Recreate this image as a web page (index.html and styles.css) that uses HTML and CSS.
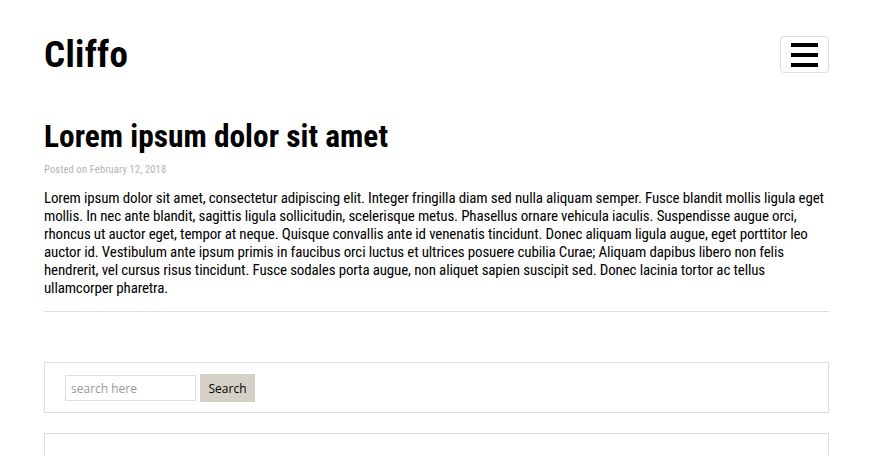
FILE: index.html
```html
<!DOCTYPE html>
<html>
<head>
<meta charset="utf-8">
<link rel="stylesheet" href="styles.css">
</head>
<body>
<div class="page">
  <header class="site-header">
    <div class="logo">Cliffo</div>
    <button class="menu-btn" aria-label="menu">
      <span class="bar"></span><span class="bar"></span><span class="bar"></span>
    </button>
  </header>
  <article class="post">
    <h1 class="post-title">Lorem ipsum dolor sit amet</h1>
    <div class="post-meta">Posted on February 12, 2018</div>
    <p class="post-body">Lorem ipsum dolor sit amet, consectetur adipiscing elit. Integer fringilla diam sed nulla aliquam semper. Fusce blandit mollis ligula eget mollis. In nec ante blandit, sagittis ligula sollicitudin, scelerisque metus. Phasellus ornare vehicula iaculis. Suspendisse augue orci, rhoncus ut auctor eget, tempor at neque. Quisque convallis ante id venenatis tincidunt. Donec aliquam ligula augue, eget porttitor leo auctor id. Vestibulum ante ipsum primis in faucibus orci luctus et ultrices posuere cubilia Curae; Aliquam dapibus libero non felis hendrerit, vel cursus risus tincidunt. Fusce sodales porta augue, non aliquet sapien suscipit sed. Donec lacinia tortor ac tellus ullamcorper pharetra.</p>
  </article>
  <section class="widget search-widget">
    <form class="search-form">
      <input class="search-input" type="text" placeholder="search here">
      <button class="search-btn" type="button">Search</button>
    </form>
  </section>
  <section class="widget empty-widget"></section>
</div>
</body>
</html>
```
FILE: styles.css
```css
html, body {
  margin: 0;
  padding: 0;
  background: #fff;
}
body {
  font-family: "Roboto", "Liberation Sans", Arial, sans-serif;
  font-stretch: 75%;
  color: #000;
}
.page {
  padding: 0 44px;
}
.site-header {
  display: flex;
  justify-content: space-between;
  align-items: center;
  padding-top: 36px;
  height: 37px;
}
.logo {
  font-size: 37px;
  font-weight: bold;
  line-height: 37px;
  letter-spacing: 0.3px;
}
.menu-btn {
  width: 49px;
  height: 37px;
  box-sizing: border-box;
  border: 1px solid #ddd;
  border-radius: 4px;
  background: #fff;
  display: flex;
  flex-direction: column;
  justify-content: center;
  align-items: center;
  gap: 6px;
  padding: 0;
}
.bar {
  display: block;
  width: 27px;
  height: 4px;
  background: #000;
}
.post {
  margin-top: 47px;
  border-bottom: 1px solid #ddd;
  padding-bottom: 14px;
}
.post-title {
  font-size: 31.4px;
  line-height: 34px;
  margin: 0;
  font-weight: bold;
  letter-spacing: 0;
}
.post-meta {
  font-size: 10.5px;
  color: #b4b4b4;
  margin-top: 10px;
  line-height: 12px;
  letter-spacing: 0.15px;
}
.post-body {
  font-size: 15px;
  line-height: 18px;
  margin: 13px 0 0;
  letter-spacing: -0.15px;
}
.widget {
  border: 1px solid #ddd;
  margin-top: 50px;
}
.search-widget {
  padding: 11px 20px 10px;
}
.search-form {
  display: flex;
  align-items: center;
  gap: 4px;
}
.search-input {
  width: 131px;
  height: 26px;
  box-sizing: border-box;
  border: 1px solid #ddd;
  font-family: "Open Sans", "DejaVu Sans", sans-serif;
  font-stretch: 100%;
  font-size: 12px;
  padding: 0 5px;
  margin: 0;
}
.search-input::placeholder {
  color: #999;
}
.search-btn {
  height: 28px;
  width: 55px;
  border: none;
  background: #d4d0c8;
  font-family: "Open Sans", "DejaVu Sans", sans-serif;
  font-stretch: 100%;
  font-size: 12px;
  color: #000;
  padding: 0;
  margin: 0;
}
.empty-widget {
  margin-top: 20px;
  height: 60px;
}
```
